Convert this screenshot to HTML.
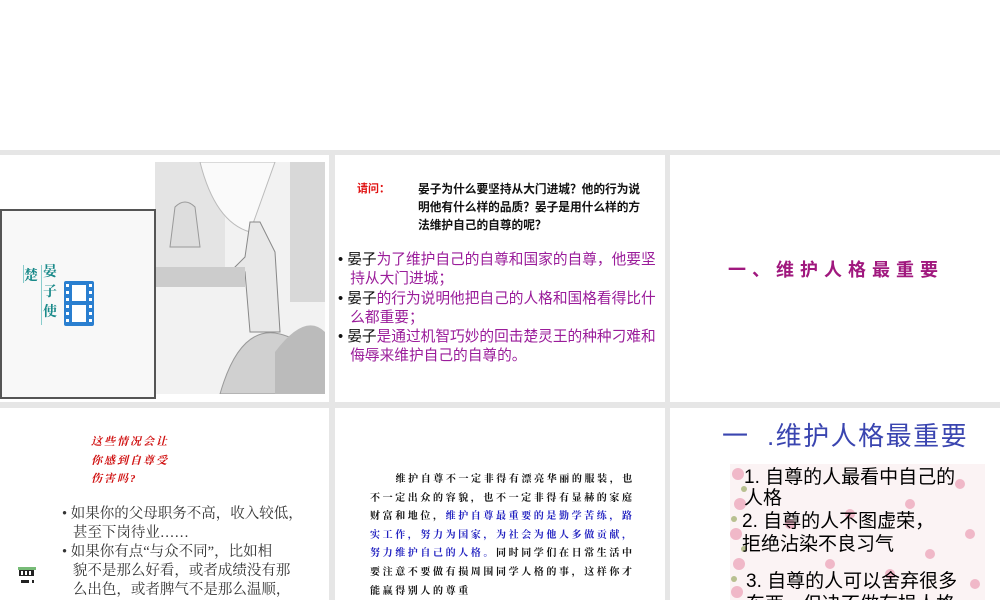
<!DOCTYPE html>
<html><head><meta charset="utf-8"><style>
*{margin:0;padding:0;box-sizing:border-box}
html,body{width:1000px;height:600px;overflow:hidden}
body{background:#fff;position:relative;font-family:"Liberation Sans","Noto Sans CJK SC",sans-serif}
.gray{position:absolute;background:#e6e6e6}
.p{position:absolute;background:#fff}
.a{position:absolute;white-space:nowrap}
.ser{font-family:"Liberation Serif","Noto Serif CJK SC",serif}
</style></head><body>
<div class="gray" style="left:0;top:150px;width:1000px;height:450px"></div>
<div class="p" style="left:0;top:155px;width:329px;height:247px"></div>
<div class="p" style="left:335px;top:155px;width:330px;height:247px"></div>
<div class="p" style="left:670px;top:155px;width:330px;height:247px"></div>
<div class="p" style="left:0;top:408px;width:329px;height:192px"></div>
<div class="p" style="left:335px;top:408px;width:330px;height:192px"></div>
<div class="p" style="left:670px;top:408px;width:330px;height:192px"></div>

<svg class="a" style="left:155px;top:162px" width="170" height="232" viewBox="0 0 170 232">
<rect width="170" height="232" fill="#f2f2f2"/>
<rect x="0" y="0" width="70" height="110" fill="#e4e4e4"/>
<rect x="135" y="0" width="35" height="140" fill="#d8d8d8"/>
<path d="M45 0 Q60 60 95 70 L120 0Z" fill="#fafafa" stroke="#bbb"/>
<path d="M20 45 q10-10 20 0 l5 40 h-30z" fill="#ddd" stroke="#999"/>
<path d="M95 60 l10 0 l15 30 l5 80 l-30 0 l-5-60 l-25 10 l25-25z" fill="#e8e8e8" stroke="#888"/>
<rect x="0" y="105" width="90" height="20" fill="#ccc"/>
<path d="M65 232 q20-70 60-60 q40 10 45 60z" fill="#d0d0d0" stroke="#999"/>
<path d="M120 190 q30-40 50-20 v62 h-50z" fill="#bbb"/>
</svg>
<div class="a" style="left:0;top:209px;width:156px;height:190px;border:2px solid #555;background:#f8f8f8"></div>
<div class="a" style="left:23px;top:265px;width:1px;height:18px;background:#8cc"></div>
<div class="a" style="left:41px;top:265px;width:1px;height:60px;background:#8cc"></div>
<div class="a ser" style="left:24px;top:265px;font-size:14px;color:#1a8a8a;font-weight:bold">楚</div>
<div class="a ser" style="left:43px;top:263px;font-size:14px;line-height:20px;color:#1a8a8a;font-weight:bold">晏<br>子<br>使</div>
<svg class="a" style="left:63px;top:280px" width="32" height="47" viewBox="0 0 32 47">
<rect x="1" y="1" width="30" height="45" rx="2" fill="#2a7fd0"/>
<rect x="9" y="5" width="14" height="16" fill="#fff"/><rect x="9" y="25" width="14" height="17" fill="#fff"/>
<g fill="#fff"><rect x="3" y="4" width="3" height="3"/><rect x="3" y="11" width="3" height="3"/><rect x="3" y="18" width="3" height="3"/><rect x="3" y="25" width="3" height="3"/><rect x="3" y="32" width="3" height="3"/><rect x="3" y="39" width="3" height="3"/>
<rect x="26" y="4" width="3" height="3"/><rect x="26" y="11" width="3" height="3"/><rect x="26" y="18" width="3" height="3"/><rect x="26" y="25" width="3" height="3"/><rect x="26" y="32" width="3" height="3"/><rect x="26" y="39" width="3" height="3"/></g>
</svg>

<div class="a" style="left:357px;top:180px;font-size:11px;font-weight:bold;color:#e01010">请问：</div>
<div class="a" style="left:418px;top:181px;font-size:11.7px;line-height:18px;font-weight:bold;color:#111">晏子为什么要坚持从大门进城？他的行为说<br>明他有什么样的品质？晏子是用什么样的方<br>法维护自己的自尊的呢？</div>
<div class="a" style="left:338px;top:251px;font-size:14.7px;line-height:19.3px;color:#9a1c9a">
<span style="color:#111">• 晏子</span>为了维护自己的自尊和国家的自尊，他要坚<br>&nbsp;&nbsp;&nbsp;持从大门进城；<br>
<span style="color:#111">• 晏子</span>的行为说明他把自己的人格和国格看得比什<br>&nbsp;&nbsp;&nbsp;么都重要；<br>
<span style="color:#111">• 晏子</span>是通过机智巧妙的回击楚灵王的种种刁难和<br>&nbsp;&nbsp;&nbsp;侮辱来维护自己的自尊的。</div>

<div class="a" style="left:728px;top:256px;font-size:18px;font-weight:bold;color:#a0187e;letter-spacing:6px">一、维护人格最重要</div>

<div class="a ser" style="left:91px;top:433px;font-size:11px;line-height:18.5px;font-weight:bold;font-style:italic;color:#d01010;letter-spacing:2px">这些情况会让<br>你感到自尊受<br>伤害吗?</div>
<div class="a ser" style="left:62px;top:505px;font-size:14.5px;line-height:19px;color:#333">• 如果你的父母职务不高，收入较低，<br>&nbsp;&nbsp;&nbsp;甚至下岗待业……<br>• 如果你有点“与众不同”，比如相<br>&nbsp;&nbsp;&nbsp;貌不是那么好看，或者成绩没有那<br>&nbsp;&nbsp;&nbsp;么出色，或者脾气不是那么温顺，</div>
<svg class="a" style="left:17px;top:565px" width="22" height="20"><rect x="1" y="2" width="18" height="3" fill="#7b7"/><rect x="2" y="5" width="15" height="6" fill="#222"/><rect x="4" y="6" width="2" height="4" fill="#fff"/><rect x="8" y="6" width="2" height="4" fill="#fff"/><rect x="12" y="6" width="2" height="4" fill="#fff"/><rect x="4" y="15" width="8" height="3" fill="#222"/><rect x="15" y="15" width="2" height="3" fill="#222"/></svg>

<div class="a ser" style="left:370px;top:471px;font-size:10px;line-height:18.6px;color:#111;letter-spacing:2.6px;font-weight:bold">
&nbsp;&nbsp;&nbsp;&nbsp;&nbsp;维护自尊不一定非得有漂亮华丽的服装，也<br>不一定出众的容貌，也不一定非得有显赫的家庭<br>财富和地位，<span style="color:#2020c0">维护自尊最重要的是勤学苦练，路</span><br><span style="color:#2020c0">实工作，努力为国家，为社会为他人多做贡献，</span><br><span style="color:#2020c0">努力维护自己的人格。</span>同时同学们在日常生活中<br>要注意不要做有损周围同学人格的事，这样你才<br>能赢得别人的尊重</div>

<svg class="a" style="left:730px;top:464px" width="255" height="136">
<rect width="255" height="136" fill="#fbf3f4"/>
<g fill="#f0b8c8"><circle cx="8" cy="10" r="6"/><circle cx="10" cy="40" r="6"/><circle cx="6" cy="70" r="6"/><circle cx="9" cy="100" r="6"/><circle cx="7" cy="128" r="6"/>
<circle cx="60" cy="60" r="5"/><circle cx="120" cy="50" r="5"/><circle cx="180" cy="40" r="5"/><circle cx="230" cy="20" r="5"/><circle cx="200" cy="90" r="5"/><circle cx="240" cy="70" r="5"/><circle cx="100" cy="100" r="5"/><circle cx="160" cy="110" r="5"/><circle cx="245" cy="120" r="5"/></g>
<g fill="#b8c090"><circle cx="14" cy="25" r="3"/><circle cx="4" cy="55" r="3"/><circle cx="14" cy="85" r="3"/><circle cx="4" cy="115" r="3"/></g>
</svg>
<div class="a" style="left:722px;top:416px;font-size:26px;color:#3a45b0;letter-spacing:1.5px">一&nbsp;&nbsp;.维护人格最重要</div>
<div class="a" style="left:744px;top:467px;font-size:19px;line-height:21px;color:#000">1. 自尊的人最看中自己的<br>人格</div>
<div class="a" style="left:742px;top:510px;font-size:19px;line-height:23px;color:#000">2. 自尊的人不图虚荣，<br>拒绝沾染不良习气</div>
<div class="a" style="left:746px;top:570px;font-size:19px;line-height:23px;color:#000">3. 自尊的人可以舍弃很多<br>东西，但决不做有损人格</div>
</body></html>
